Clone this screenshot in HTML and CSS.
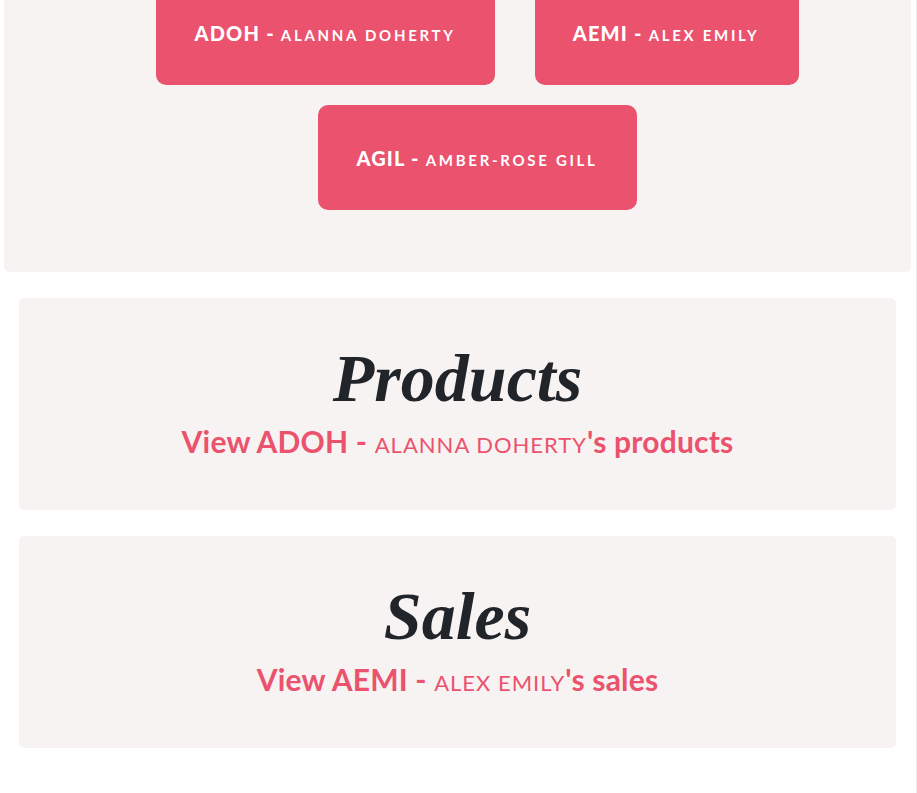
FILE: index.html
```html
<!DOCTYPE html>
<html>
<head>
<meta charset="utf-8">
<link rel="stylesheet" href="styles.css">
</head>
<body>
<div class="page">
  <section class="card top-card">
    <div class="btn-wrap">
      <a class="btn">ADOH - <span class="sc">Alanna Doherty</span></a>
      <a class="btn">AEMI - <span class="sc">Alex Emily</span></a>
      <a class="btn">AGIL - <span class="sc">Amber-Rose Gill</span></a>
    </div>
  </section>
  <section class="card info-card">
    <h2 class="title">Products</h2>
    <a class="link">View ADOH - <span class="sc-link">Alanna Doherty</span>'s products</a>
  </section>
  <section class="card info-card">
    <h2 class="title">Sales</h2>
    <a class="link">View AEMI - <span class="sc-link">Alex Emily</span>'s sales</a>
  </section>
</div>
</body>
</html>
```
FILE: styles.css
```css
html, body {
  margin: 0;
  padding: 0;
  background: #ffffff;
  overflow: hidden;
}
.page {
  width: 907px;
  min-height: 840px;
  padding: 0 5px 0 4px;
  border-right: 1px solid #ececec;
  font-family: Lato, "Liberation Sans", sans-serif;
}
.card {
  background: #f7f3f2;
  border-radius: 5px;
}
.top-card {
  margin-top: -40px;
  padding: 20px 0 62px 40px;
}
.btn-wrap {
  display: flex;
  flex-wrap: wrap;
  justify-content: center;
  gap: 20px 40px;
}
.btn {
  display: flex;
  align-items: baseline;
  justify-content: center;
  height: 105px;
  padding: 41px 39px 0 38px;
  box-sizing: border-box;
  background: #eb526e;
  color: #ffffff;
  border-radius: 10px;
  font-weight: 900;
  font-size: 20px;
  line-height: 24px;
  letter-spacing: 1.2px;
  white-space: pre;
}
.sc {
  text-transform: uppercase;
  font-weight: 700;
  letter-spacing: 2.7px;
  font-size: 15px;
}
.info-card {
  margin: 26px 15px 0 15px;
  height: 212px;
  box-sizing: border-box;
  text-align: center;
  padding-top: 40px;
}
.title {
  margin: 0;
  font-family: "Liberation Serif", serif;
  font-style: italic;
  font-weight: 700;
  font-size: 68px;
  line-height: 80px;
  color: #212529;
}
.link {
  display: block;
  margin-top: 3px;
  color: #eb526e;
  font-weight: 700;
  font-size: 30px;
  line-height: 40px;
  letter-spacing: 0.2px;
}
.sc-link {
  text-transform: uppercase;
  font-weight: 400;
  font-size: 22px;
  letter-spacing: 1px;
}
```
